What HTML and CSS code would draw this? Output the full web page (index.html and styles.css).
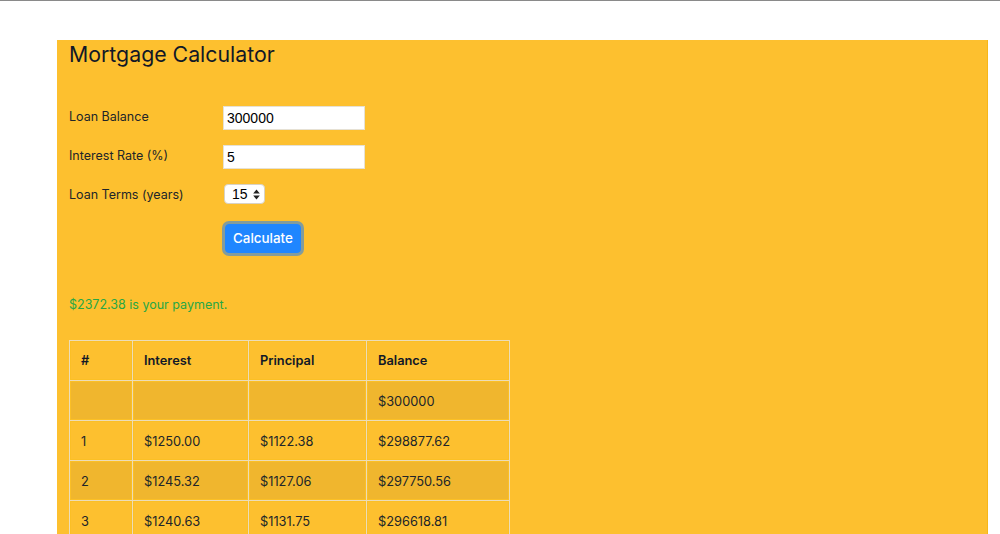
FILE: index.html
```html
<!DOCTYPE html>
<html>
<head>
<meta charset="utf-8">
<link rel="stylesheet" href="styles.css">
</head>
<body>
<div class="topline"></div>
<main class="card">
  <h1 class="title">Mortgage Calculator</h1>
  <form class="form">
    <label class="label">Loan Balance</label>
    <input class="input" type="text" value="300000">
    <label class="label">Interest Rate (%)</label>
    <input class="input" type="text" value="5">
    <label class="label">Loan Terms (years)</label>
    <div class="selectwrap"><span class="select">15 <svg width="7" height="11" viewBox="0 0 7 11"><path d="M3.5 0.5 L6.8 4.5 H0.2Z M3.5 10.5 L6.8 6.5 H0.2Z" fill="#222"/></svg></span></div>
    <span></span>
    <div><button type="button" class="btn">Calculate</button></div>
  </form>
  <p class="result">$2372.38 is your payment.</p>
  <table class="table">
    <thead>
      <tr><th class="c1">#</th><th class="c2">Interest</th><th class="c3">Principal</th><th class="c4">Balance</th></tr>
    </thead>
    <tbody>
      <tr class="odd"><td></td><td></td><td></td><td>$300000</td></tr>
      <tr><td>1</td><td>$1250.00</td><td>$1122.38</td><td>$298877.62</td></tr>
      <tr class="odd"><td>2</td><td>$1245.32</td><td>$1127.06</td><td>$297750.56</td></tr>
      <tr><td>3</td><td>$1240.63</td><td>$1131.75</td><td>$296618.81</td></tr>
    </tbody>
  </table>
</main>
</body>
</html>
```
FILE: styles.css
```css
html, body { margin: 0; padding: 0; background: #fff; overflow: hidden; height: 534px; }
body { font-family: Inter, "Liberation Sans", sans-serif; color: #212529; font-size: 12.5px; }
.topline { height: 1px; background: #8a8a8a; }
.card {
  margin: 39px 12px 0 57px;
  background: #fdc02f;
  border-right: 1px solid #f7b719;
  padding: 0 12px;
  height: 520px;
}
.title { margin: 0; padding-top: 0; font-size: 21.3px; font-weight: 400; line-height: 28px; color: #111827; }
.form {
  display: grid;
  grid-template-columns: 154px auto;
  justify-content: start;
  row-gap: 15px;
  margin-top: 38px;
  align-items: start;
}
.label { line-height: 20px; padding-top: 1px; }
.input {
  width: 142px; height: 24px; box-sizing: border-box;
  border: 1px solid #e6e1d4; border-radius: 0; padding: 1px 3px;
  font-family: "Liberation Sans", sans-serif; font-size: 14px; color: #000; background: #fff;
}
.selectwrap { height: 20px; }
.select {
  display: inline-flex; align-items: center; gap: 5px;
  height: 20px; box-sizing: border-box; padding: 0 4px 0 7px;
  margin-top: 0; margin-left: 1px;
  background: #fff; border: 1px solid #d8d2c4; border-radius: 4px;
  font-family: "Liberation Sans", sans-serif; font-size: 14px; color: #000;
}
.btn {
  margin-top: 4px; margin-left: 2px;
  background: #1f86ff; color: #fff; border: 1px solid #1f86ff;
  border-radius: 4px; font-family: Inter, "Liberation Sans", sans-serif; font-size: 13.4px; font-weight: 500;
  padding: 0 7px; height: 29px; line-height: 27px;
  box-shadow: 0 0 0 3px #839c9c;
}
.result { color: #28a745; margin: 42px 0 0; line-height: 20px; }
.table {
  margin-top: 25px; border-collapse: collapse; width: 441px;
}
.table th, .table td {
  border: 1px solid #ecdcb8;
  box-shadow: inset 0 0 0 1px #fbbf25;
  height: 40px; box-sizing: border-box; padding: 1px 11px 0; text-align: left;
  font-size: 12.8px; vertical-align: middle;
}
.table th { font-weight: 600; color: #111827; padding-top: 0; }
.c1 { width: 63px; }
.c2 { width: 116px; }
.c3 { width: 118px; }
.odd td { background: #f0b62e; }
```
